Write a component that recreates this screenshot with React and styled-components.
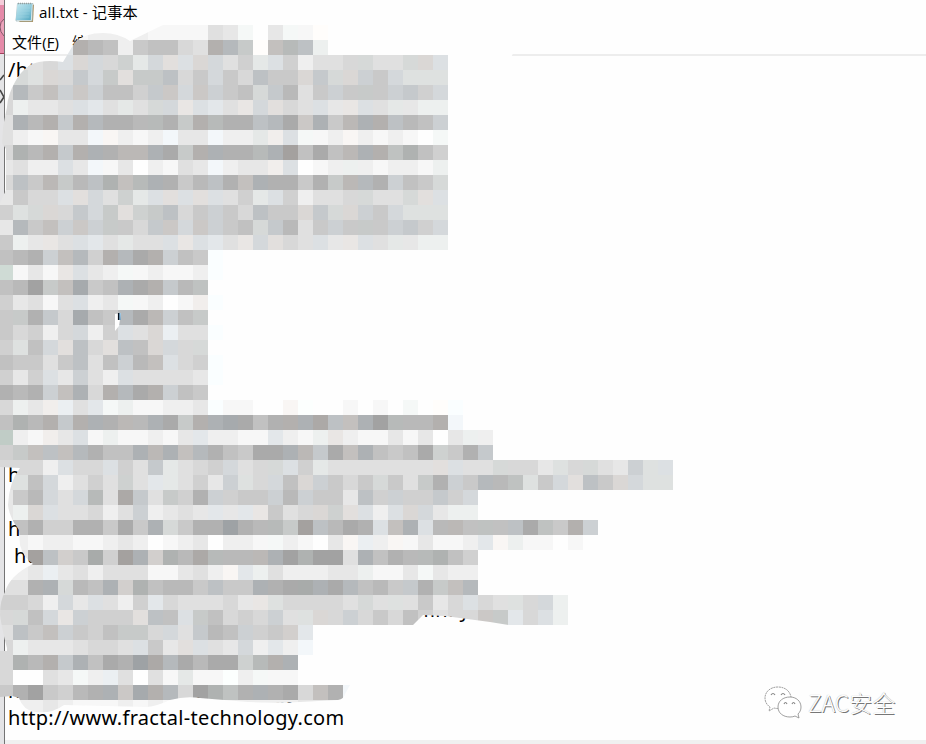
import React from "react";
import styled, { createGlobalStyle } from "styled-components";

const Global = createGlobalStyle`
  * { box-sizing: border-box; }
  html, body { margin: 0; background: #fff; overflow: hidden; }
`;

const Desktop = styled.main`
  position: relative;
  display: flex;
  width: 926px;
  height: 744px;
  overflow: hidden;
  background: #fff;
`;

const Behind = styled.aside`
  flex: 0 0 5px;
  height: 744px;
  border-right: 1px solid #747474;
  background: #e4e4e6;
`;

const Window = styled.section`
  flex: 1;
  display: flex;
  flex-direction: column;
  min-width: 0;
  background: #fefefe;
  color: #000;
`;

const TitleBar = styled.header`
  display: flex;
  align-items: center;
  height: 27px;
  padding: 0 0 4px 10px;
  gap: 4px;
`;

const Title = styled.span`
  font: 15.2px/24px "Open Sans", "Noto Sans CJK SC", sans-serif;
  font-weight: 400;
  letter-spacing: 0.12px;
  white-space: pre;
`;

const MenuBar = styled.nav`
  display: flex;
  gap: 13px;
  height: 29px;
  padding: 5px 0 0 7px;
  border-bottom: 2px solid #ededed;
  font: 15px/21px "Open Sans", "Noto Sans CJK SC", sans-serif;
`;

const MenuItem = styled.span`
  letter-spacing: 0.1px;
  u { text-underline-offset: 2px; }
`;

const Editor = styled.div`
  flex: 1;
  padding: 0 0 0 3px;
`;

const Line = styled.div`
  display: flex;
  height: 27px;
  font: 20px/27px "Noto Sans", "Open Sans", sans-serif;
  letter-spacing: 0.31px;
  white-space: pre;
`;

const Fragment = styled.span`
  flex: 0 0 auto;
  margin-left: ${(p) => p.$gap || 0}px;
`;

const StatusEdge = styled.footer`
  height: 4px;
  background: #f0f0f0;
`;

const Overlay = styled.svg`
  position: absolute;
  inset: 0;
  pointer-events: none;
`;

const Watermark = styled.div`
  position: absolute;
  left: 764px;
  top: 684px;
  display: flex;
  align-items: center;
  gap: 6px;
  height: 38px;
`;

const WatermarkText = styled.span`
  position: relative;
  top: -1px;
  font: 300 23px/38px "Noto Sans CJK SC", sans-serif;
  color: #fff;
  text-shadow: 1px 1px 0 #777, 0 0 1px #aaa;
  white-space: nowrap;
`;

// Each cell: a lightness letter (a dark … m white) and a tint (. b w g G); "--" is empty.
const ROWS = [
  "-- -- -- -- l. l. k. k. k. k. l. l. l. l. i. j. lg m. j. lg l. mw",
  "-- -- -- -- jb cw d. e. k. f. e. e. h. i. cw db fg mw ew dg eb kg",
  "-- i. i. h. ib hw hb h. gg jg hb iw ib hw hb i. g. jg ib g. k. i. i. h. hg i. i. hg hw ib",
  "h. hg ig hw h. fb hb fg iw fg fg eb h. f. hb f. h. eb f. f. hw fb hg hw gb f. hb ig ig ig",
  "h. db f. ew gb fw gb e. e. g. fb fw hb fw gb f. e. hg fb d. i. f. gb f. fg f. gb fb g. hb",
  "h. kg j. j. i. ib jb i. jg i. hg hb jw ib jb i. jw hb iw h. i. ib j. jw ib i. jg j. kg kg",
  "i. cb d. cw fb cw db c. c. d. dg c. fg cw dg c. c. eb db b. fw cb f. dw cb cw eb d. e. gb",
  "i. k. l. lw j. j. lb lw k. l. k. lb j. j. lb k. k. jg kw ib lg l. k. lw k. l. k. l. m. lg",
  "h. cg d. cw fb cw cb c. dw dw cb b. fg cw cb c. c. dg cb aw e. b. e. dw cb cw eg cg e. g.",
  "j. i. k. k. ib j. lb l. j. m. k. l. i. j. lb k. j. j. kw ib m. l. k. kg k. l. k. k. l. kg",
  "h. eb f. dw fg d. eb cg ew dg cb c. f. d. eb c. ew cb c. c. f. c. fg dw db c. gb e. f. hg",
  "j. f. h. h. ib iw hb i. gg jg ib iw ib iw ib i. g. jg ib g. k. i. i. h. hg i. i. hg iw ib",
  "g. ig hg hw h. fb hb fg iw gg fg eb h. f. gb f. h. eb f. f. hw fb hg hw gb f. hb ig ig ig",
  "j. db f. ew gb fw gb fg f. h. fb fw hb fw gb f. e. hg fb d. i. f. gb f. fg f. gb fb g. hb",
  "f. kg j. jw i. ib jb i. jg i. i. ib jw ib jb i. jw hb iw h. i. ib j. jw ib i. jg j. kg kg",
  "e. d. c. gb ew db g. cw db b. cw gb e. f. mb",
  "hG l. j. l. jw ib j. k. lg l. k. l. l. k. mb",
  "e. d. a. fg ew bb f. e. cb b. cw fb d. eg m.",
  "g. j. i. l. i. ib k. j. lg l. k. m. l. kw mb",
  "f. fg c. fb h. bb e. f. db b. dw gb e. fg",
  "f. h. g. k. h. hb k. g. ib i. hw kb i. i. mb",
  "g. ig e. hb iw eb h. iw eb e. hw hb h. hg",
  "e. f. f. i. f. eb i. e. gb d. ew ib h. g. mb",
  "g. j. g. ib j. gb i. k. ib i. i. i. i. j. mb",
  "c. d. c. gb ew cb h. cw db b. cw gb e. f.",
  "h. kg j. kw kb i. jb lg kg l. l. k. k. j. mb l. l. m. m. lw mg m. m. l. m. l. m. lg m. mw mb",
  "e. cg d. cw fb cw cb c. dw d. cb b. fg cw cb bb b. e. c. cw cb bw eb ew cb a. dg d. d. cw lb",
  "fG k. l. kw j. ib l. kg l. l. k. l. j. jb k. k. l. l. jb k. l. kg jw k. l. l. j. l. j. m. j. kg k.",
  "g. fg ew eb ew db c. e. e. cb dw cb ew db c. e. f. b. b. cb dw fb b. ew cb e. f. e. b. gg f. c. fb",
  "h. h. h. k. ib h. h. ib g. i. fb jg i. h. g. hb i. h. hg ib g. jg i. i. i. i. i. i. i. iw ib i. i. hg h. h. j. ig h. hg i. j. gb ig ib",
  "i. ig e. hb k. i. g. i. gg i. jb jg i. g. j. gb ig h. hb e. hw gb f. h. f. hg f. i. fg c. gb f. db d. eg ig f. hb iw eb f. hw hb ig ig",
  "j. f. d. hb i. hb dg i. bw fb i. fg g. c. gb g. f. f. gb d. gb f. f. j. eb g. gb g. g. fb g. hb",
  "j. kg hw ib i. i. h. k. i. gb k. j. i. j. jb j. jb jw f. i. h. hw gg iw ib k. ib hw hb j. kg kg",
  "-- e. c. g. g. c. c. f. b. f. cb hg f. c. c. ab c. d. dg fg aw eb d. b. c. ib ew cb ib d. dw e. eg e. eb b. eg f. cw gb",
  "-- k. l. k. k. l. l. k. j. k. m. l. k. j. m. k. k. l. lg k. l. m. j. lw kb k. lw l. j. l. l. k. jb lw kg l. l. m. l. m.",
  "-- j. aw eb gw f. bg g. aw cb gw cg d. bw dg d. d. dw cb a. cg a. a. i. cb e. c. d. dg cg e. g.",
  "k. k. j. kb j. i. k. i. i. i. l. l. j. i. k. lw jb kg i. k. k. k. j. j. kg l. l. j. lg j. k. k.",
  "i. i. c. cb hg d. e. cb gw cg e. d. d. f. eb f. f. cb c. b. bg cb b. db e. d. f. fb c. fg ew db",
  "g. g. h. k. hb j. ib i. k. g. jb h. i. i. i. h. j. jw ig h. h. h. h. i. hg i. ig i. f. j. h. ib h. i. ig h. hb kg",
  "h. hg e. hb jw gb g. g. g. iw eb e. ib fg e. h. g. h. gb i. ig hw h. gb h. f. h. e. g. i. h. h. fw fg jb h. ib kg",
  "i. eb f. ew gb f. g. e. fg fg h. hb i. fb d. e. gb g. f. gw jb",
  "h. kg j. j. j. i. h. h. i. ib f. j. iw ib i. j. hb k. jb k. lb",
  "h. cg d. cw fb cb e. b. c. ab bw db b. d. b. b. gg dg cw cb",
  "h. m. m. i. j. lg k. kb i. m. i. l. jg l. l. mg k. lg l. l.",
  "f. c. a. f. g. d. c. cb fw bb cw db h. a. cg eg c. cb c. b. h. ew c. lb",
  "-- k. k. j. k. l. l. l. k. l. k. l. k. k. k. k. k. k. k. k. j. j. j.",
];

const TINTS = {
  ".": [0, 0, 0],
  b: [-4, 0, 3],
  w: [2, -1, -3],
  g: [-2, 1, 0],
  G: [-9, 3, -3],
};

function cellColor(code) {
  const base = 162 + (code.charCodeAt(0) - 97) * 7.7;
  const rgb = TINTS[code[1]].map((d) => Math.min(255, Math.round(base + d)));
  return `rgb(${rgb.join(",")})`;
}

const COVER =
  "M163 25L130 41Q118 33 103 33Q85 33 75 42L63 62Q57 61 50 61Q38 61 30 65Q20 72 15 82Q8 94 7 107L3 127L2 143L6 149V190L0 203V467L20 468Q9 482 8 505Q9 517 19 530L20 545Q23 557 33 564Q10 575 5 592Q0 600 0 615Q2 630 7 648L7 651H0V697L12 696L19 698Q23 710 35 712Q52 714 64 705L147 707Q157 706 170 700Q185 696 200 698L248 702L280 703L338 700Q344 699 345 694L350 685V640L413 625L423 615L445 616L490 622L515 626H700V25Z M115 314L121 313L119 326L115 331Z";

function Mosaic() {
  return (
    <Overlay width="926" height="744" viewBox="0 0 926 744" aria-hidden="true">
      <defs>
        <clipPath id="cover">
          <path d={COVER} clipRule="evenodd" />
        </clipPath>
      </defs>
      <g clipPath="url(#cover)" shapeRendering="crispEdges">
        {ROWS.map((row, r) =>
          row.split(" ").map((code, c) =>
            code === "--" ? null : (
              <rect key={`${r}-${c}`} x={c * 15 - 2} y={25 + r * 15} width="15" height="15" fill={cellColor(code)} />
            )
          )
        )}
      </g>
      <path d="M118.700 313v7" stroke="#06101c" strokeWidth="1.600" />
      <path d="M120 313v7" stroke="#2686c8" strokeWidth=".8" />
    </Overlay>
  );
}

function BehindArt() {
  return (
    <svg width="4" height="200" viewBox="0 0 4 200" display="block">
      <rect width="4" height="54" fill="#e58aa9" />
      <rect width="4" height="5" fill="#f4ccd9" />
      <path d="M4 19Q0 22 0 27T4 36" fill="#eba2ba" stroke="#86566a" />
      <path d="M0 53.5h4" stroke="#a3405c" />
      <path d="M4 75L0 80M0 90L4 97L0 103" fill="none" stroke="#444" strokeWidth="1.6" />
    </svg>
  );
}

function NotepadIcon() {
  return (
    <svg width="20" height="22" viewBox="0 0 20 22">
      <defs>
        <linearGradient id="pad" x1="0" y1="0" x2="1" y2="1">
          <stop offset="0" stopColor="#c5e9f1" />
          <stop offset=".55" stopColor="#8fcbdc" />
          <stop offset="1" stopColor="#4fa5bf" />
        </linearGradient>
      </defs>
      <path d="M17 3L19 4L18 21L4 21Z" fill="#b29663" />
      <path d="M2.5 2.5H18L17 20H1Z" fill="#e9f2f2" stroke="#8ba8ae" strokeWidth=".6" />
      <path d="M2.5 3H17L15.8 19H.7Z" fill="url(#pad)" />
      <path d="M3 7h12M2.8 10h12M2.5 13h12M2.2 16h12" stroke="#a9dae5" strokeWidth=".4" />
      <path d="M3 2.5h14" stroke="#8fa0a1" strokeWidth="1.6" strokeDasharray="1 1" />
    </svg>
  );
}

function ChatIcon() {
  return (
    <svg width="38" height="36" viewBox="0 0 38 36" fill="#fff" stroke="#888" strokeWidth=".8">
      <path d="M14 2C6 2 1 7 1 13c0 4 2 7 5 9l-1 4 5-3q4 1 7 0C25 22 27 17 27 12 26 6 21 2 14 2Z" strokeDasharray="2 .6" />
      <path d="M26 12c-7 0-12 4-12 10s5 10 12 10q3 0 5-1l4 2-1-4c2-2 3-4 3-7 0-6-5-10-11-10Z" />
      <path d="M7 10q2-3 4 0M17 10q2-3 4 0M20 19q1.500-3 3 0M28 19q1.500-3 3 0" fill="none" strokeWidth="1.200" />
    </svg>
  );
}

const LINES = Array.from({ length: 25 }, () => null);
LINES[0] = [{ text: "/http:" }];
LINES[15] = [{ text: "h" }];
LINES[17] = [{ text: "h" }];
LINES[18] = [{ text: "ht", gap: 6 }];
LINES[20] = [{ text: "ﬁnay", gap: 415 }];
LINES[23] = [{ text: "ht" }, { text: "co", gap: 166 }, { text: "gy", gap: 58 }];
LINES[24] = [{ text: "http://www.fractal-technology.com" }];

export default function App() {
  return (
    <Desktop>
      <Global />
      <Behind>
        <BehindArt />
      </Behind>
      <Window>
        <TitleBar>
          <NotepadIcon />
          <Title>all.txt - 记事本</Title>
        </TitleBar>
        <MenuBar>
          <MenuItem>
            文件(<u>F</u>)
          </MenuItem>
          <MenuItem>编</MenuItem>
        </MenuBar>
        <Editor>
          {LINES.map((parts, i) => (
            <Line key={i}>
              {parts && parts.map((p) => (
                <Fragment key={p.text} $gap={p.gap}>{p.text}</Fragment>
              ))}
            </Line>
          ))}
        </Editor>
        <StatusEdge />
      </Window>
      <Overlay width="926" height="744" viewBox="0 0 926 744" aria-hidden="true">
        <path d="M90 40H520L505 69H448V55H90Z" fill="#fefefe" />
      </Overlay>
      <Mosaic />
      <Watermark>
        <ChatIcon />
        <WatermarkText>ZAC安全</WatermarkText>
      </Watermark>
    </Desktop>
  );
}
